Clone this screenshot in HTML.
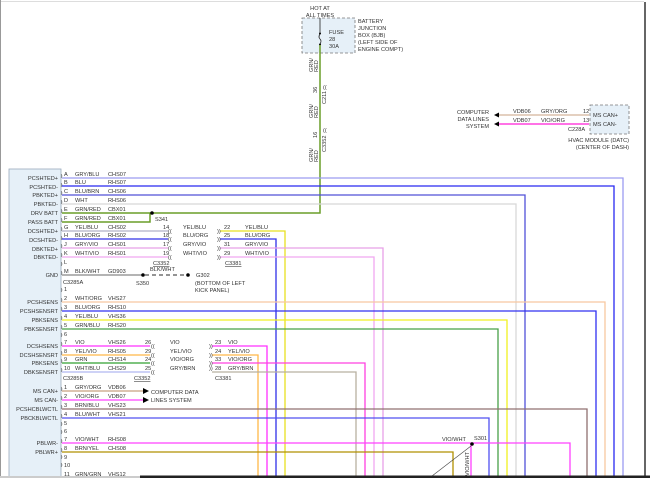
<!DOCTYPE html>
<html><head><meta charset="utf-8"><style>
html,body{margin:0;padding:0;background:#fff;}
svg{display:block;}
text{font-family:"Liberation Sans",sans-serif;font-size:5.6px;fill:#333;}
.r{text-anchor:end;}
</style></head><body>
<svg width="650" height="478" viewBox="0 0 650 478" xmlns="http://www.w3.org/2000/svg">
<rect width="650" height="478" fill="#fff"/>
<line x1="0" y1="1.5" x2="644" y2="1.5" stroke="#ddd" stroke-width="1"/>
<line x1="645" y1="2" x2="645" y2="478" stroke="#333" stroke-width="1.5"/>
<line x1="0.5" y1="0" x2="0.5" y2="478" stroke="#999" stroke-width="1"/>

<!-- fuse box -->
<rect x="302" y="18" width="53" height="35" fill="#e6f0f8" stroke="#777" stroke-dasharray="3,2" stroke-width="0.8"/>
<text x="320" y="10" text-anchor="middle">HOT AT</text>
<text x="320" y="17" text-anchor="middle">ALL TIMES</text>
<line x1="320" y1="18" x2="320" y2="33" stroke="#222" stroke-width="0.8"/>
<path d="M320 34 q-2 3 0 5 q2 2 0 5" fill="none" stroke="#222" stroke-width="0.8"/>
<circle cx="320" cy="33.5" r="1" fill="#000"/><circle cx="320" cy="44.5" r="1" fill="#000"/>
<text x="329" y="34">FUSE</text><text x="329" y="41">28</text><text x="329" y="48">30A</text>
<text x="358" y="23">BATTERY</text><text x="358" y="30">JUNCTION</text><text x="358" y="37">BOX (BJB)</text><text x="358" y="44">(LEFT SIDE OF</text><text x="358" y="51">ENGINE COMPT)</text>

<!-- green feed -->
<path d="M320 45 V213 H62 M150 213 V222 H62" fill="none" stroke="#6a9e28" stroke-width="1.5"/>
<circle cx="152" cy="213" r="1.8" fill="#000"/>
<text x="155" y="221">S341</text>
<g transform="translate(313,72) rotate(-90)"><text>GRN/</text></g>
<g transform="translate(318,72) rotate(-90)"><text>RED</text></g>
<text x="323" y="89" transform="rotate(0)">((</text>
<g transform="translate(317,93) rotate(-90)"><text>36</text></g>
<g transform="translate(326,104) rotate(-90)"><text>C211</text></g>
<g transform="translate(313,118) rotate(-90)"><text>GRN/</text></g>
<g transform="translate(318,118) rotate(-90)"><text>RED</text></g>
<text x="323" y="132">((</text>
<g transform="translate(317,138) rotate(-90)"><text>16</text></g>
<g transform="translate(326,152) rotate(-90)"><text>C3352</text></g>
<g transform="translate(313,162) rotate(-90)"><text>GRN/</text></g>
<g transform="translate(318,162) rotate(-90)"><text>RED</text></g>

<!-- HVAC -->
<rect x="590" y="105" width="39" height="29" fill="#e6f0f8" stroke="#777" stroke-dasharray="3,2" stroke-width="0.8"/>
<text x="593" y="117">MS CAN+</text><text x="593" y="126">MS CAN-</text>
<line x1="497" y1="115" x2="589" y2="115" stroke="#c8a080" stroke-width="1"/>
<line x1="497" y1="124" x2="589" y2="124" stroke="#ff44dd" stroke-width="1.5"/>
<path d="M494 115 l5 -2.5 v5z M494 124 l5 -2.5 v5z" fill="#000"/>
<text x="583" y="113">12</text><text x="583" y="122">13</text>
<text x="513" y="113">VDB06</text><text x="541" y="113">GRY/ORG</text>
<text x="513" y="122">VDB07</text><text x="541" y="122">VIO/ORG</text>
<text x="568" y="131">C228A</text>
<text x="629" y="142" class="r">HVAC MODULE (DATC)</text><text x="629" y="149" class="r">(CENTER OF DASH)</text>
<text x="489" y="114" class="r">COMPUTER</text><text x="489" y="121" class="r">DATA LINES</text><text x="489" y="128" class="r">SYSTEM</text>

<!-- left panel -->
<rect x="9" y="169" width="52" height="312" fill="#e6f0f8" stroke="#9ab" stroke-width="0.8"/>

<!-- wires -->
<g fill="none" stroke-width="1.3">
<path d="M62 178 H623 V478" stroke="#9c9cf0"/>
<path d="M62 186 H614 V478" stroke="#2828f0"/>
<path d="M62 195 H525 V478" stroke="#5050d8"/>
<path d="M62 204 H516 V478" stroke="#d8d8d8"/>
<path d="M62 231 H168" stroke="#b0b0c8"/>
<path d="M220 231 H285 V478" stroke="#e8e020"/>
<path d="M62 239 H168 M220 239 H276 V478" stroke="#3030e8"/>
<path d="M62 248 H168 M220 248 H383 V478" stroke="#e8a0e8"/>
<path d="M62 257 H168 M220 257 H374 V478" stroke="#f0a8f0"/>
<path d="M62 275 H143" stroke="#888"/>
<path d="M145 275 H186" stroke="#555" stroke-dasharray="4,3"/>
<path d="M62 302 H605 V478" stroke="#f8c8a0"/>
<path d="M62 311 H596 V478" stroke="#3030f0"/>
<path d="M62 320 H507 V478" stroke="#f0f020"/>
<path d="M62 329 H498 V478" stroke="#48a048"/>
<path d="M62 346 H150 M212 346 H267 V478" stroke="#ff30ff"/>
<path d="M62 355 H150 M212 355 H258 V478" stroke="#ffb848"/>
<path d="M62 363 H150" stroke="#30a030"/>
<path d="M212 363 H365 V478" stroke="#ff40e0"/>
<path d="M62 372 H150" stroke="#b0b8f0"/>
<path d="M212 372 H356 V478" stroke="#b8b0a0"/>
<path d="M62 391 H143" stroke="#c8a080"/>
<path d="M62 400 H143" stroke="#ff40ff"/>
<path d="M62 409 H587 V478" stroke="#907070"/>
<path d="M62 418 H489 V478" stroke="#5050f0"/>
<path d="M62 443 H570 V478 M471 443 V478" stroke="#ff40ff"/>
<path d="M62 452 H453 V478" stroke="#b09000"/>
</g>
<path d="M143 388 l6 3 -6 3z M143 397 l6 3 -6 3z" fill="#000"/>
<text x="151" y="394">COMPUTER DATA</text><text x="151" y="402">LINES SYSTEM</text>
<circle cx="143" cy="275" r="1.8" fill="#000"/><circle cx="188" cy="275" r="1.8" fill="#000"/>
<text x="150" y="271">BLK/WHT</text><text x="136" y="285">S350</text>
<text x="196" y="277">G302</text><text x="195" y="285">(BOTTOM OF LEFT</text><text x="195" y="292">KICK PANEL)</text>
<circle cx="472" cy="444" r="1.8" fill="#000"/>
<text x="474" y="440">S301</text><text x="442" y="441">VIO/WHT</text>
<line x1="471" y1="446" x2="432" y2="476" stroke="#444" stroke-width="0.6"/>
<g transform="translate(469,476) rotate(-90)"><text>VIO/WHT</text></g>

<!-- labels -->
<g>
<text x="58" y="180" class="r">PCSHTED+</text><text x="58" y="189" class="r">PCSHTED-</text>
<text x="58" y="197" class="r">PBKTED+</text><text x="58" y="206" class="r">PBKTED-</text>
<text x="58" y="215" class="r">DRV BATT</text><text x="58" y="224" class="r">PASS BATT</text>
<text x="58" y="233" class="r">DCSHTED+</text><text x="58" y="242" class="r">DCSHTED-</text>
<text x="58" y="251" class="r">DBKTED+</text><text x="58" y="259" class="r">DBKTED-</text>
<text x="58" y="277" class="r">GND</text>
<text x="58" y="304" class="r">PCSHSENS</text><text x="58" y="313" class="r">PCSHSENSRT</text>
<text x="58" y="322" class="r">PBKSENS</text><text x="58" y="331" class="r">PBKSENSRT</text>
<text x="58" y="348" class="r">DCSHSENS</text><text x="58" y="357" class="r">DCSHSENSRT</text>
<text x="58" y="365" class="r">PBKSENS</text><text x="58" y="374" class="r">DBKSENSRT</text>
<text x="58" y="393" class="r">MS CAN+</text><text x="58" y="402" class="r">MS CAN-</text>
<text x="58" y="411" class="r">PCSHCBLWCTL</text><text x="58" y="420" class="r">PBCKBLWCTL</text>
<text x="58" y="445" class="r">PBLWR-</text><text x="58" y="454" class="r">PBLWR+</text>
</g>
<g>
<text x="64" y="176">A</text><text x="75" y="176">GRY/BLU</text><text x="108" y="176">CHS07</text>
<text x="64" y="184">B</text><text x="75" y="184">BLU</text><text x="108" y="184">RHS07</text>
<text x="64" y="193">C</text><text x="75" y="193">BLU/BRN</text><text x="108" y="193">CHS06</text>
<text x="64" y="202">D</text><text x="75" y="202">WHT</text><text x="108" y="202">RHS06</text>
<text x="64" y="211">E</text><text x="75" y="211">GRN/RED</text><text x="108" y="211">CBX01</text>
<text x="64" y="220">F</text><text x="75" y="220">GRN/RED</text><text x="108" y="220">CBX01</text>
<text x="64" y="229">G</text><text x="75" y="229">YEL/BLU</text><text x="108" y="229">CHS02</text>
<text x="64" y="237">H</text><text x="75" y="237">BLU/ORG</text><text x="108" y="237">RHS02</text>
<text x="64" y="246">J</text><text x="75" y="246">GRY/VIO</text><text x="108" y="246">CHS01</text>
<text x="64" y="255">K</text><text x="75" y="255">WHT/VIO</text><text x="108" y="255">RHS01</text>
<text x="64" y="264">L</text>
<text x="64" y="273">M</text><text x="75" y="273">BLK/WHT</text><text x="108" y="273">GD903</text>
<text x="63" y="284">C3285A</text>
<text x="64" y="291">1</text>
<text x="64" y="300">2</text><text x="75" y="300">WHT/ORG</text><text x="108" y="300">VHS27</text>
<text x="64" y="309">3</text><text x="75" y="309">BLU/ORG</text><text x="108" y="309">RHS10</text>
<text x="64" y="318">4</text><text x="75" y="318">YEL/BLU</text><text x="108" y="318">VHS36</text>
<text x="64" y="327">5</text><text x="75" y="327">GRN/BLU</text><text x="108" y="327">RHS20</text>
<text x="64" y="336">6</text>
<text x="64" y="344">7</text><text x="75" y="344">VIO</text><text x="108" y="344">VHS26</text>
<text x="64" y="353">8</text><text x="75" y="353">YEL/VIO</text><text x="108" y="353">RHS05</text>
<text x="64" y="361">9</text><text x="75" y="361">GRN</text><text x="108" y="361">CHS14</text>
<text x="64" y="370">10</text><text x="75" y="370">WHT/BLU</text><text x="108" y="370">CHS29</text>
<text x="63" y="380">C3285B</text>
<text x="64" y="389">1</text><text x="75" y="389">GRY/ORG</text><text x="108" y="389">VDB06</text>
<text x="64" y="398">2</text><text x="75" y="398">VIO/ORG</text><text x="108" y="398">VDB07</text>
<text x="64" y="407">3</text><text x="75" y="407">BRN/BLU</text><text x="108" y="407">VHS23</text>
<text x="64" y="416">4</text><text x="75" y="416">BLU/WHT</text><text x="108" y="416">VHS21</text>
<text x="64" y="425">5</text><text x="64" y="433">6</text>
<text x="64" y="441">7</text><text x="75" y="441">VIO/WHT</text><text x="108" y="441">RHS08</text>
<text x="64" y="450">8</text><text x="75" y="450">BRN/YEL</text><text x="108" y="450">CHS08</text>
<text x="64" y="459">9</text><text x="64" y="467">10</text>
<text x="64" y="476">11</text><text x="75" y="476">GRN/GRN</text><text x="108" y="476">VHS12</text>
</g>
<!-- pin brackets -->
<g fill="none" stroke="#333" stroke-width="0.5">
<path d="M61 174 q2 2 0 4 M61 183 q2 2 0 4 M61 191 q2 2 0 4 M61 200 q2 2 0 4 M61 209 q2 2 0 4 M61 218 q2 2 0 4 M61 227 q2 2 0 4 M61 236 q2 2 0 4 M61 244 q2 2 0 4 M61 253 q2 2 0 4 M61 262 q2 2 0 4 M61 271 q2 2 0 4 M61 288 q2 2 0 4 M61 298 q2 2 0 4 M61 307 q2 2 0 4 M61 316 q2 2 0 4 M61 325 q2 2 0 4 M61 333 q2 2 0 4 M61 342 q2 2 0 4 M61 351 q2 2 0 4 M61 359 q2 2 0 4 M61 368 q2 2 0 4 M61 387 q2 2 0 4 M61 396 q2 2 0 4 M61 405 q2 2 0 4 M61 414 q2 2 0 4 M61 422 q2 2 0 4 M61 430 q2 2 0 4 M61 439 q2 2 0 4 M61 448 q2 2 0 4 M61 455 q2 2 0 4 M61 463 q2 2 0 4"/>
</g>
<!-- inline connectors upper -->
<g>
<text x="163" y="229">14</text><text x="168" y="233">((</text><text x="183" y="229">YEL/BLU</text><text x="217" y="233">))</text><text x="224" y="229">22</text><text x="245" y="229">YEL/BLU</text>
<text x="163" y="237">18</text><text x="168" y="241">((</text><text x="183" y="237">BLU/ORG</text><text x="217" y="241">))</text><text x="224" y="237">25</text><text x="245" y="237">BLU/ORG</text>
<text x="163" y="246">17</text><text x="168" y="250">((</text><text x="183" y="246">GRY/VIO</text><text x="217" y="250">))</text><text x="224" y="246">31</text><text x="245" y="246">GRY/VIO</text>
<text x="163" y="255">19</text><text x="168" y="259">((</text><text x="183" y="255">WHT/VIO</text><text x="217" y="259">))</text><text x="224" y="255">29</text><text x="245" y="255">WHT/VIO</text>
<text x="153" y="265" text-decoration="underline">C3352</text><text x="225" y="265" text-decoration="underline">C3381</text>
<text x="145" y="344">26</text><text x="151" y="348">((</text><text x="170" y="344">VIO</text><text x="209" y="348">))</text><text x="215" y="344">23</text><text x="228" y="344">VIO</text>
<text x="145" y="353">29</text><text x="151" y="357">((</text><text x="170" y="353">YEL/VIO</text><text x="209" y="357">))</text><text x="215" y="353">24</text><text x="228" y="353">YEL/VIO</text>
<text x="145" y="361">24</text><text x="151" y="365">((</text><text x="170" y="361">VIO/ORG</text><text x="209" y="365">))</text><text x="215" y="361">33</text><text x="228" y="361">VIO/ORG</text>
<text x="145" y="370">25</text><text x="151" y="374">((</text><text x="170" y="370">GRY/BRN</text><text x="209" y="370">))</text><text x="215" y="370">28</text><text x="228" y="370">GRY/BRN</text>
<text x="134" y="380" text-decoration="underline">C3352</text><text x="215" y="380">C3381</text>
</g>
<rect x="0" y="476" width="140" height="2" fill="#ccc"/>
<rect x="140" y="475.5" width="510" height="2.5" fill="#222"/>
</svg>
</body></html>
